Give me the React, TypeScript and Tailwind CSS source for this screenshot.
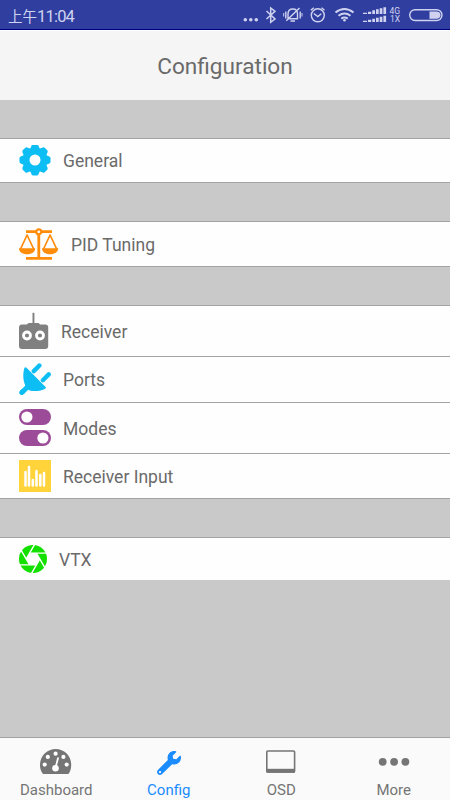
import type { ReactNode } from 'react';
import { FaWrench } from 'react-icons/fa';

const GearIcon = () => (
  <svg width="32" height="32" viewBox="-16 -15 32 32" fill="#0cbef4">
    {[0, 45, 90, 135, 180, 225, 270, 315].map((angle) => (
      <path
        key={angle}
        d="M-5-10.500-3.400-14.400Q-2.900-15.500-1.800-15.500H1.800Q2.900-15.500 3.400-14.400L5-10.500Z"
        transform={`rotate(${angle})`}
      />
    ))}
    <circle r="9" fill="none" stroke="#0cbef4" strokeWidth="7" />
  </svg>
);

const ScalesIcon = () => (
  <svg width="40" height="34" viewBox="0 -1 40 34" fill="#ff8c0a">
    <path d="M7 2.200h26v2.700H7zM18.400 5h2.800v25h-2.800zM7 29h26v2.800H7z" />
    <circle cx="19.800" cy="3.800" r="2.500" fill="#fff" stroke="#ff8c0a" strokeWidth="2.200" />
    <path d="M1.300 21.500 8.100 7l6.800 14.500M24.300 21.500 31.100 7l6.800 14.500" fill="none" stroke="#ff8c0a" strokeWidth="1.700" strokeLinejoin="round" />
    <path d="M0 20.300h16.200c0 3.800-3.400 6-8.100 6S0 24.100 0 20.300zM23 20.300h16.200c0 3.800-3.400 6-8.100 6s-8.100-2.200-8.100-6z" />
  </svg>
);

const TransmitterIcon = () => (
  <svg width="30" height="38" viewBox="0 0 30 38" fill="#808080">
    <path d="M13.500.8h1.900V13h-1.900z" />
    <path d="M3 12.500h5c.8-1.200 1.500-1.500 3-1.500h7c1.500 0 2.200.3 3 1.500h5.200q3 0 3 3V34q0 3-3 3H3Q0 37 0 34V15.500q0-3 3-3z" />
    <g fill="none" stroke="#fff" strokeWidth="2.800">
      <circle cx="8" cy="23.500" r="3.500" />
      <circle cx="21" cy="23.500" r="3.500" />
    </g>
  </svg>
);

const PlugIcon = () => (
  <svg width="33" height="33" viewBox="0 .5 33 33" fill="#0cbef4">
    <path d="M7.500 5.200 26.600 24.500Q27.400 25.500 26.200 26.200C22 28.700 16 29 10.500 28 4.500 24 3 13 5.300 5.700Q6 4 7.500 5.200z" />
    <g fill="none" stroke="#0cbef4" strokeLinecap="round">
      <path d="m14.800 8.600 5.600-5.600M23.900 17.700l5.800-5.800" strokeWidth="4.400" />
      <path d="m9.500 23.500-6.600 6.600" strokeWidth="5" strokeLinecap="butt" />
      <path d="m3.400 29.300-.6.600" strokeWidth="5" />
    </g>
  </svg>
);

const SwitchesIcon = () => (
  <svg width="32" height="38" viewBox="0 0 32 38" fill="#9b4b97">
    <rect width="32" height="16" rx="8" />
    <rect y="21" width="32" height="16" rx="8" />
    <circle cx="7.900" cy="8" r="5.600" fill="#fff" />
    <circle cx="23.900" cy="29" r="5.600" fill="#fff" />
  </svg>
);

const BarsIcon = () => (
  <svg width="32" height="32" viewBox="0 0 32 32">
    <path d="M0 0h32v32H0z" fill="#ffd43b" />
    <g stroke="#fff" strokeWidth="2.500" strokeLinecap="round">
      <path d="M6.500 12v13.500M10 7v18.500M13.800 20v5.500M17.500 11v14.500M21.300 15v10.500M25 13v12.500" />
    </g>
  </svg>
);

const ApertureIcon = () => (
  <svg width="28" height="30" viewBox="-14 -15 28 30">
    <circle r="14" fill="#14e000" />
    <circle r="5.800" fill="#fff" />
    {[0, 60, 120, 180, 240, 300].map((angle) => (
      <path
        key={angle}
        d="M0 0-3.800-6.600H14V-5.200H3Z"
        fill="#fff"
        transform={`rotate(${angle})`}
      />
    ))}
  </svg>
);

const GaugeIcon = () => (
  <svg width="32" height="26" viewBox="0 0 32 26">
    <path d="M3 25C.8 22.500 0 19.500 0 15.800 0 7 7 0 15.700 0s15.500 7 15.500 15.800c0 3.700-.8 6.700-2.800 9.200z" fill="#757575" />
    <g fill="#fff">
      <circle cx="4.700" cy="15.600" r="2.100" />
      <circle cx="7.800" cy="7.900" r="2.100" />
      <circle cx="15.600" cy="4.700" r="2.100" />
      <circle cx="23.400" cy="7.900" r="2.100" />
      <circle cx="26.700" cy="15.600" r="2.100" />
      <circle cx="15.500" cy="19.300" r="3.300" />
    </g>
    <path d="m15.700 18 2.300-8.800" stroke="#fff" strokeWidth="1.800" strokeLinecap="round" />
  </svg>
);

const ScreenIcon = () => (
  <svg width="30" height="26" viewBox="0 0 30 26">
    <rect x=".8" y="2" width="27.800" height="21" rx="1" fill="none" stroke="#757575" strokeWidth="1.600" />
    <path d="M.500 19.800h28.400v4H.500z" fill="#757575" />
  </svg>
);

const DotsIcon = () => (
  <svg width="32" height="26" viewBox="0 0 32 26" fill="#757575">
    <circle cx="4.700" cy="12.800" r="3.900" />
    <circle cx="16.100" cy="12.800" r="3.900" />
    <circle cx="27.400" cy="12.800" r="3.900" />
  </svg>
);

// Icons on the right side of the system status bar
const StatusIcons = () => (
  <svg width="205" height="29" viewBox="243 0 205 29" fill="none" stroke="#d0d3f0" strokeWidth="1.400">
    <g fill="#d0d3f0" stroke="none">
      <circle cx="245.300" cy="19.700" r="1.800" />
      <circle cx="250.800" cy="19.700" r="1.800" />
      <circle cx="256.300" cy="19.700" r="1.800" />
    </g>
    <path d="m266.500 11 8.500 8-4.300 3.300V8l4.300 3.300-8.500 7.700" strokeWidth="1.500" />
    <path d="M288 18.800V14c0-3 1.700-5 4.800-5s4.700 2 4.700 5v4.800zM290.500 21h4.500M286.300 20.800 299.500 8M285.800 11.500v7M300.200 11.500v7" />
    <path d="M283.700 13v3.500M302 13v3.500" strokeWidth="1" />
    <circle cx="317.800" cy="15.300" r="6.500" />
    <path d="m313.800 13.500 4 3 3.500-2.800M310.800 10.200l3-2.500M321.500 7.700l3 2.500" />
    <g strokeWidth="2">
      <path d="M335.500 12.500q9-7 18 0M338.500 15.800q6-4.500 12 0M341.300 18.600q3.200-2 6.400 0" />
    </g>
    <circle cx="344.500" cy="20.300" r="1.300" fill="#d0d3f0" stroke="none" />
    <g fill="#d0d3f0" stroke="none">
      <path d="M363 12.700h4v1.300h-4zM368 11.700h3.200V14H368zM372.300 10.300h2.700V14h-2.700zM376 9.300h2.700V14H376zM379.700 8.300h2.700V14h-2.700zM383.400 7.300h2.700V14h-2.700z" />
      <path d="M363 20.700h4V22h-4zM368 19.700h3.200V22H368zM372.300 18.700h2.700V22h-2.700zM376 17.700h2.700V22H376zM379.700 16.700h2.700V22h-2.700zM383.400 15.700h2.700V22h-2.700z" />
      <g fontFamily="Roboto, sans-serif" fontSize="8.500">
        <text x="389.500" y="13.500">4G</text>
        <text x="390" y="22">1X</text>
      </g>
    </g>
    <rect x="409.700" y="9.700" width="32.300" height="10.800" rx="5.400" />
    <path d="M429.500 11.500h7.500q3.500.5 3.500 3.600t-3.500 3.600h-7.500z" fill="#d0d3f0" stroke="none" />
  </svg>
);

interface RowProps {
  icon: ReactNode;
  label: string;
  className: string;
}

const Row = ({ icon, label, className }: RowProps) => (
  <div className={`flex items-center bg-[#fefefe] pl-[19px] ${className}`}>
    {icon}
    <span className="pt-0.5">{label}</span>
  </div>
);

const tabs = [
  { label: 'Dashboard', icon: <GaugeIcon /> },
  { label: 'Config', icon: <FaWrench size={24} className="mt-0.5" />, active: true },
  { label: 'OSD', icon: <ScreenIcon /> },
  { label: 'More', icon: <DotsIcon /> },
];

export default function App() {
  return (
    <div className="flex h-[800px] w-[450px] flex-col overflow-hidden bg-[#c9c9c9] font-[Roboto,'Noto_Sans_CJK_SC',sans-serif] text-[#6a6a6a]">
      <div className="flex h-[30px] shrink-0 items-center justify-between border-b border-[#000080] bg-[#303f9f] pl-2 pr-[2px] text-base text-[#d0d3f0]">
        <span className="pt-[5px] text-[14.5px] leading-none">
          上午<span className="text-[16.5px] tracking-[-0.8px]">11:04</span>
        </span>
        <StatusIcons />
      </div>

      <header className="flex h-[70px] shrink-0 items-center justify-center border-t border-white bg-[#f5f5f5] pt-0.5 text-[22.6px]">
        Configuration
      </header>

      <main className="flex grow flex-col pt-[38px] text-[17.5px]">
        <section className="border-y border-[#a3a3a3]">
          <Row icon={<GearIcon />} label="General" className="h-[43px] gap-3" />
        </section>

        <section className="mt-[38px] border-y border-[#a3a3a3]">
          <Row icon={<ScalesIcon />} label="PID Tuning" className="h-11 gap-3" />
        </section>

        <section className="mt-[38px] divide-y divide-[#a3a3a3] border-y border-[#a3a3a3]">
          <Row icon={<TransmitterIcon />} label="Receiver" className="h-[51px] gap-3" />
          <Row icon={<PlugIcon />} label="Ports" className="h-[46px] gap-[11px]" />
          <Row icon={<SwitchesIcon />} label="Modes" className="h-[51px] gap-3" />
          <Row icon={<BarsIcon />} label="Receiver Input" className="h-[44px] gap-3" />
        </section>

        <section className="mt-[38px] border-t border-[#a3a3a3]">
          <Row icon={<ApertureIcon />} label="VTX" className="h-[42px] gap-3" />
        </section>
      </main>

      <nav className="grid h-[63px] shrink-0 grid-cols-4 border-t border-[#a3a3a3] bg-[#fafafa] text-[15px] text-[#757575]">
        {tabs.map((tab) => (
          <div
            key={tab.label}
            className={`flex flex-col items-center pt-[11px] ${tab.active ? 'text-[#1a8cff]' : ''}`}
          >
            <div className="flex h-[26px] items-center">{tab.icon}</div>
            <span className="mt-[5px] leading-5">{tab.label}</span>
          </div>
        ))}
      </nav>
    </div>
  );
}
